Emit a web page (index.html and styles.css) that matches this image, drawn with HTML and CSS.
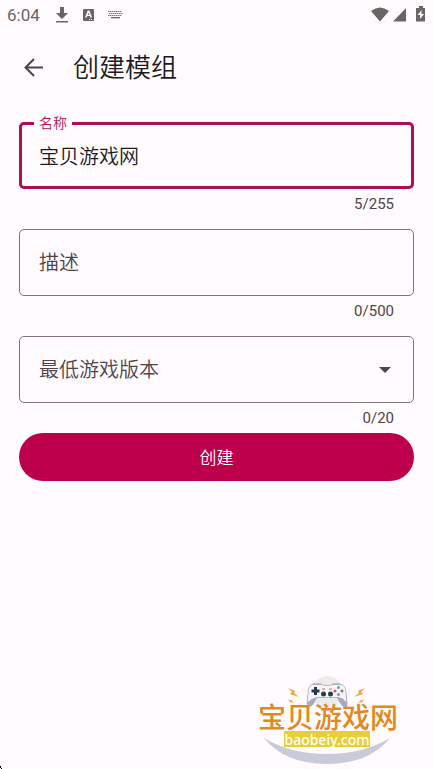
FILE: index.html
```
<!DOCTYPE html>
<html lang="zh-CN">
<head>
<meta charset="utf-8">
<meta name="viewport" content="width=device-width, initial-scale=1">
<title>创建模组</title>
<link rel="stylesheet" href="styles.css">
</head>
<body>
<div class="status">
  <span class="clock">6:04</span>
  <svg class="status-left" width="70" height="18" viewBox="0 0 70 18" aria-hidden="true">
    <path d="M5 1h4v6h4l-6 6-6-6h4zM1 15h12v1.500H1z"/>
    <rect x="28" y="3" width="11" height="12" rx="1"/>
    <path class="cut" d="M32.700 4.500h1.700l2.600 7h-1.600l-.6-1.500h-2.500l-.6 1.500h-1.600zm.8 2l-.8 2.300h1.600zM34 13h1v1h-1zM36 13h1v1h-1z"/>
    <path class="keys" d="M53 5.500h14M54 7.500h14M53 9.500h14"/>
    <path d="M56 11h9v1.300h-9z"/>
  </svg>
  <svg class="status-right" width="56" height="18" viewBox="0 0 56 18" aria-hidden="true">
    <path d="M1 5Q10 -2 19 5L10 15.500zM23 15.500L36 2v13.500zM49 0h4v2h2v13.500H46V2h3z"/>
    <path class="cut" d="M51.500 4l-4 5H50v4l4-5h-2.500z"/>
  </svg>
</div>

<header class="bar">
  <button class="back" type="button" aria-label="返回">
    <svg width="20" height="20" viewBox="0 0 20 20" aria-hidden="true"><path d="M19 9.500H2M10 1L1.500 9.500l8.500 8.500"/></svg>
  </button>
  <h1>创建模组</h1>
</header>

<form class="form">
  <div class="field active">
    <label for="name">名称</label>
    <input id="name" type="text" value="宝贝游戏网" maxlength="255">
    <div class="count">5/255</div>
  </div>
  <div class="field">
    <input type="text" aria-label="描述" placeholder="描述" maxlength="500">
    <div class="count">0/500</div>
  </div>
  <div class="field">
    <select aria-label="最低游戏版本"><option>最低游戏版本</option></select>
    <svg class="caret" width="12" height="6" viewBox="0 0 12 6" aria-hidden="true"><path d="M0 0h12L6 6z"/></svg>
    <div class="count">0/20</div>
  </div>
  <button class="submit" type="button">创建</button>
</form>

<footer class="foot">
  <svg class="speck" width="2" height="3" viewBox="0 0 2 3" aria-hidden="true"><path d="M0 0h1v2H0zM1 2h1v1H1z"/></svg>
  <svg class="logo" width="160" height="99" viewBox="0 0 160 99" role="img" aria-label="宝贝游戏网 baobeiy.com">
    <circle cx="77" cy="22" r="16" fill="#ececec"/>
    <path d="M14 68Q35 94 77 94Q119 94 140 68Q113 84 77 84Q41 84 14 68z" fill="#c9ccd8"/>
    <path fill="#f0a52c" d="M38 18l7 3-1 2 5 4-9-3 2-2zM37 29l6 2-1 1 4 1-7-1 1-1zM115 18l-7 3 1 2-5 4 9-3-2-2zM115 29l-6 2 1 1-4 1 7-1-1-1z"/>
    <path d="M63 13h8v3h-8zM82 13h8v3h-8z" fill="#eac44a"/>
    <path d="M58 23Q57 33 57 38q6 0 10-11h20q4 11 10 11 1-4-1-15z" fill="#a9abbb"/>
    <path d="M62 14.500h9q2 1 6 1t6-1h8q5 1 5 9l1 10q-4-6-9-6H67q-6 1-10 6l1-10q0-8 4-9z" fill="#f6f6fa" stroke="#9c9daf" stroke-width=".7"/>
    <path d="M65.500 17v8M61.500 21h8" stroke="#253b48" stroke-width="3"/>
    <circle cx="73.500" cy="24" r="2.500" fill="#303946"/><circle cx="80.500" cy="24" r="2.500" fill="#303946"/>
    <path d="M72 19h3M79 19h3" stroke="#d96670"/>
    <circle cx="88.500" cy="17.500" r="1.500" fill="#46aebc"/><circle cx="88.500" cy="24.500" r="1.500" fill="#46aebc"/>
    <circle cx="85" cy="21" r="1.500" fill="#e3525b"/><circle cx="92" cy="21" r="1.500" fill="#e3525b"/>
    <text class="logo-name" x="78" y="58">宝贝游戏网</text>
    <rect x="34" y="61" width="86" height="16" fill="#e9ce35"/>
    <text class="logo-url" x="77" y="75">baobeiy.com</text>
  </svg>
</footer>
</body>
</html>
```
FILE: styles.css
```
* { box-sizing: border-box; }

body {
  margin: 0;
  min-height: 100vh;
  display: flex;
  flex-direction: column;
  background: #fffbff;
  color: #201a1b;
  font-family: Roboto, "Noto Sans CJK SC", sans-serif;
  font-weight: 350;
}

svg { display: block; }

.status {
  height: 30px;
  padding: 0 7px;
  display: flex;
  align-items: center;
  color: #666;
  fill: #666;
}
.clock { width: 48px; font-size: 17px; font-weight: 400; }
.status-right { margin-left: auto; }
.cut { fill: #fffbff; }
.keys { stroke: #777; stroke-width: 1; stroke-dasharray: 1.500 .5; }

.bar {
  height: 76px;
  padding: 0 24px;
  display: flex;
  align-items: center;
  gap: 29px;
}
.back {
  padding: 0;
  border: 0;
  background: none;
}
.back svg { fill: none; stroke: #4a4549; stroke-width: 2; }
h1 { margin: 0; font-size: 26px; font-weight: 350; line-height: 36px; }

.form {
  padding: 16px 19px 0;
  display: flex;
  flex-direction: column;
  gap: 10px;
}
.field { position: relative; }
.field input, .field select {
  display: block;
  width: 100%;
  height: 67px;
  padding: 0 19px;
  border: 1px solid #837377;
  border-radius: 5px;
  outline: 0;
  appearance: none;
  background: transparent;
  color: #514347;
  font-family: inherit;
  font-size: 20px;
  font-weight: inherit;
}
.field input::placeholder { color: #514347; opacity: 1; }
.field.active input { padding: 0 17px; border: 3px solid #ab1050; color: #201a1b; }
.field label {
  position: absolute;
  top: -9px;
  left: 15px;
  padding: 0 5px;
  background: #fffbff;
  color: #ab1050;
  font-size: 14px;
  line-height: 20px;
}
.caret { position: absolute; top: 31px; right: 23px; fill: #514347; }
.count {
  height: 30px;
  padding-right: 20px;
  text-align: right;
  color: #514347;
  font-size: 15px;
  font-weight: 400;
  line-height: 30px;
}
.submit {
  height: 48px;
  margin-top: -10px;
  padding: 0 0 2px;
  border: 0;
  border-radius: 24px;
  background: #bc004b;
  color: #fff;
  font-family: inherit;
  font-size: 17px;
  font-weight: inherit;
}

.foot {
  margin-top: auto;
  padding-right: 23px;
  display: flex;
  justify-content: space-between;
  align-items: flex-end;
}
.logo-name {
  fill: #df8a20;
  font-family: "Noto Sans CJK SC", sans-serif;
  font-size: 28px;
  font-weight: 500;
  text-anchor: middle;
}
.logo-url {
  fill: #fff;
  font-family: "Noto Sans", sans-serif;
  font-size: 14px;
  font-weight: 500;
  text-anchor: middle;
}
```
